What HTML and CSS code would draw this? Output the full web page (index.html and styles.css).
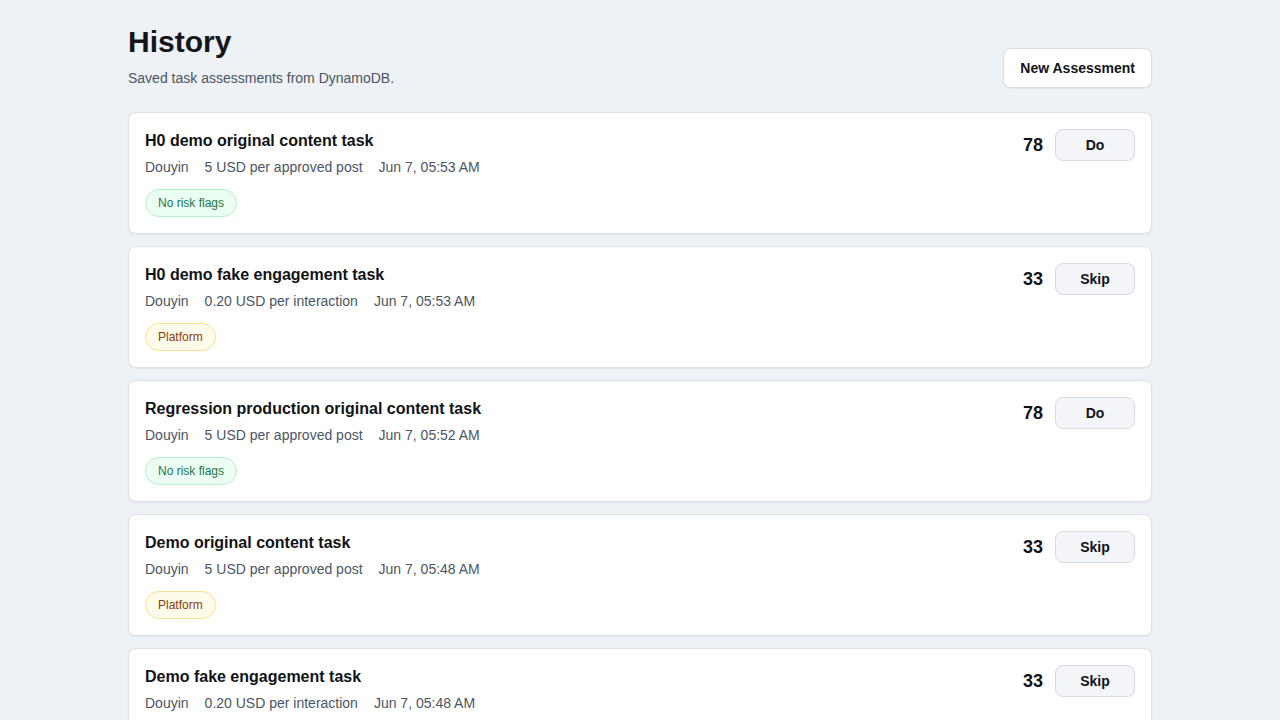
FILE: index.html
```html
<!DOCTYPE html>
<html lang="en">
<head>
<meta charset="utf-8">
<title>History</title>
<link rel="stylesheet" href="styles.css">
</head>
<body>
<main class="page">
  <header class="page-header">
    <div class="heading">
      <h1 class="title">History</h1>
      <p class="subtitle">Saved task assessments from DynamoDB.</p>
    </div>
    <button class="btn-primary" type="button">New Assessment</button>
  </header>

  <section class="list">
    <article class="card">
      <div class="card-main">
        <h2 class="card-title">H0 demo original content task</h2>
        <div class="meta"><span>Douyin</span><span>5 USD per approved post</span><span>Jun 7, 05:53 AM</span></div>
        <div class="tags"><span class="pill pill-ok">No risk flags</span></div>
      </div>
      <div class="card-side"><span class="score">78</span><button class="btn-decision" type="button">Do</button></div>
    </article>

    <article class="card">
      <div class="card-main">
        <h2 class="card-title">H0 demo fake engagement task</h2>
        <div class="meta"><span>Douyin</span><span>0.20 USD per interaction</span><span>Jun 7, 05:53 AM</span></div>
        <div class="tags"><span class="pill pill-warn">Platform</span></div>
      </div>
      <div class="card-side"><span class="score">33</span><button class="btn-decision" type="button">Skip</button></div>
    </article>

    <article class="card">
      <div class="card-main">
        <h2 class="card-title">Regression production original content task</h2>
        <div class="meta"><span>Douyin</span><span>5 USD per approved post</span><span>Jun 7, 05:52 AM</span></div>
        <div class="tags"><span class="pill pill-ok">No risk flags</span></div>
      </div>
      <div class="card-side"><span class="score">78</span><button class="btn-decision" type="button">Do</button></div>
    </article>

    <article class="card">
      <div class="card-main">
        <h2 class="card-title">Demo original content task</h2>
        <div class="meta"><span>Douyin</span><span>5 USD per approved post</span><span>Jun 7, 05:48 AM</span></div>
        <div class="tags"><span class="pill pill-warn">Platform</span></div>
      </div>
      <div class="card-side"><span class="score">33</span><button class="btn-decision" type="button">Skip</button></div>
    </article>

    <article class="card">
      <div class="card-main">
        <h2 class="card-title">Demo fake engagement task</h2>
        <div class="meta"><span>Douyin</span><span>0.20 USD per interaction</span><span>Jun 7, 05:48 AM</span></div>
        <div class="tags"><span class="pill pill-warn">Platform</span></div>
      </div>
      <div class="card-side"><span class="score">33</span><button class="btn-decision" type="button">Skip</button></div>
    </article>
  </section>
</main>
</body>
</html>
```

FILE: styles.css
```css
* { box-sizing: border-box; }

html, body {
  margin: 0;
  background: #eef1f6;
  color: #111318;
  font-family: "Liberation Sans", Arial, sans-serif;
}

.page {
  width: 1024px;
  margin: 0 auto;
  padding: 24px 0 40px;
}

.page-header {
  display: flex;
  justify-content: space-between;
  align-items: flex-end;
  margin-bottom: 24px;
}

.title {
  margin: 0;
  font-size: 30px;
  line-height: 36px;
  font-weight: 700;
  color: #14161b;
}

.subtitle {
  margin: 8px 0 0;
  font-size: 14px;
  line-height: 20px;
  color: #4b5563;
}

.btn-primary {
  height: 40px;
  padding: 0 16px;
  background: #ffffff;
  border: 1px solid #d8dde5;
  border-radius: 8px;
  font-family: inherit;
  font-size: 14px;
  font-weight: 700;
  color: #111318;
  box-shadow: 0 1px 2px rgba(15, 23, 42, 0.05);
}

.list {
  display: flex;
  flex-direction: column;
  gap: 12px;
}

.card {
  display: flex;
  justify-content: space-between;
  align-items: flex-start;
  padding: 16px;
  background: #ffffff;
  border: 1px solid #dde2ea;
  border-radius: 8px;
  box-shadow: 0 1px 2px rgba(15, 23, 42, 0.05);
}

.card-title {
  margin: 0;
  font-size: 16px;
  line-height: 24px;
  font-weight: 700;
  color: #111318;
}

.meta {
  display: flex;
  gap: 16px;
  margin-top: 4px;
  font-size: 14px;
  line-height: 20px;
  color: #4b5563;
}

.tags {
  display: flex;
  gap: 8px;
  margin-top: 12px;
}

.pill {
  display: inline-block;
  padding: 0 12px;
  height: 28px;
  line-height: 26px;
  font-size: 12px;
  border-radius: 999px;
  border: 1px solid;
}

.pill-ok {
  background: #ecfdf3;
  border-color: #b7f0cc;
  color: #17794a;
}

.pill-warn {
  background: #fffbea;
  border-color: #fbe08f;
  color: #8a3c0c;
}

.card-side {
  display: flex;
  align-items: center;
  gap: 12px;
}

.score {
  font-size: 18px;
  font-weight: 700;
  color: #111318;
}

.btn-decision {
  width: 80px;
  height: 32px;
  background: #f3f5f8;
  border: 1px solid #d6dbe3;
  border-radius: 8px;
  font-family: inherit;
  font-size: 14px;
  font-weight: 700;
  color: #111318;
}
```
